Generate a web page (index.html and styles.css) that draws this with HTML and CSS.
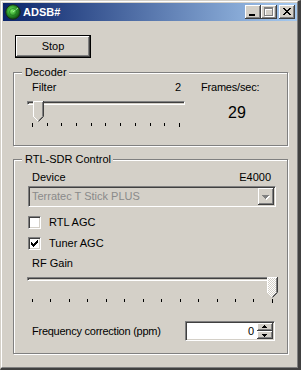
FILE: index.html
```html
<!DOCTYPE html>
<html lang="en">
<head>
  <meta charset="UTF-8">
  <meta name="viewport" content="width=device-width, initial-scale=1.0">
  <title>ADSB#</title>
  <link rel="stylesheet" href="styles.css">
</head>
<body>
  <div class="window">
    <div class="frame">
      <div class="titlebar">
        <svg class="app-icon" width="16" height="16" viewBox="0 0 16 16">
          <defs>
            <radialGradient id="radar" cx="0.42" cy="0.4" r="0.6">
              <stop offset="0" stop-color="#7ef06a"/>
              <stop offset="0.55" stop-color="#2f9a2a"/>
              <stop offset="1" stop-color="#0c4a10"/>
            </radialGradient>
          </defs>
          <circle cx="8" cy="8" r="7.3" fill="url(#radar)" stroke="#1a2a1a" stroke-width="1"/>
          <path d="M8 8L13 4" stroke="#b8ffb0" stroke-width="0.8"/>
          <circle cx="8" cy="8" r="3.5" fill="none" stroke="#1d6a1d" stroke-width="0.6"/>
        </svg>
        <span class="title">ADSB#</span>
        <div class="caption-buttons">
          <span class="cap-btn">
            <svg width="16" height="14" viewBox="0 0 16 14"><path d="M4 9h6v2h-6z" fill="#000"/></svg>
          </span>
          <span class="cap-btn">
            <svg width="16" height="14" viewBox="0 0 16 14">
              <path d="M4 3h9v2h-9z M4 5h1v7h-1z M12 5h1v7h-1z M4 11h9v1h-9z" fill="#fff"/>
              <path d="M3 2h9v2h-9z M3 4h1v7h-1z M11 4h1v7h-1z M3 10h9v1h-9z" fill="#808080"/>
            </svg>
          </span>
          <span class="cap-btn close">
            <svg width="16" height="14" viewBox="0 0 16 14"><path d="M4 3h2v1h-2z M10 3h2v1h-2z M5 4h2v1h-2z M9 4h2v1h-2z M6 5h4v1h-4z M7 6h2v1h-2z M6 7h4v1h-4z M5 8h2v1h-2z M9 8h2v1h-2z M4 9h2v1h-2z M10 9h2v1h-2z" fill="#000"/></svg>
          </span>
        </div>
      </div>

      <div class="client">
        <button class="btn default" type="button">Stop</button>

        <div class="group decoder">
          <span class="group-caption">Decoder</span>
          <div class="decoder-body">
            <div class="filter-col">
              <div class="label-row"><span>Filter</span><span>2</span></div>
              <div class="trackbar">
                <div class="channel"></div>
                <svg class="thumb filter-thumb" width="11" height="21" viewBox="0 0 11 21">
                  <polygon points="0,0 11,0 11,16 5.5,21 0,16" fill="#d4d0c8"/>
                  <path d="M0.5 16V0.5H10" stroke="#fff" fill="none"/>
                  <path d="M0.5 15.5L5 20" stroke="#fff" fill="none"/>
                  <path d="M9.5 1V15.5L5.5 19.5" stroke="#808080" fill="none"/>
                  <path d="M10.5 0V15.5L5.5 20.5" stroke="#404040" fill="none"/>
                </svg>
              </div>
              <div class="ticks">
                <i class="long"></i><i></i><i></i><i></i><i></i><i></i><i></i><i></i><i></i><i></i><i class="long"></i>
              </div>
            </div>
            <div class="fps-col">
              <div class="label-row">Frames/sec:</div>
              <div class="fps">29</div>
            </div>
          </div>
        </div>

        <div class="group rtl">
          <span class="group-caption">RTL-SDR Control</span>
          <div class="rtl-body">
            <div class="device-row"><span>Device</span><span>E4000</span></div>
            <div class="combo">
              <span class="combo-text">Terratec T Stick PLUS</span>
              <span class="combo-btn">
                <svg width="16" height="17" viewBox="0 0 16 17">
                  <path d="M5 8h7v1h-7z M6 9h5v1h-5z M7 10h3v1h-3z M8 11h1v1h-1z" fill="#fff"/>
                  <path d="M4 7h7v1h-7z M5 8h5v1h-5z M6 9h3v1h-3z M7 10h1v1h-1z" fill="#808080"/>
                </svg>
              </span>
            </div>
            <div class="check-row first">
              <span class="check"></span>
              <span>RTL AGC</span>
            </div>
            <div class="check-row">
              <span class="check">
                <svg width="9" height="9" viewBox="0 0 9 9"><path d="M7 1h1v1h-1z M6 2h2v1h-2z M1 3h1v1h-1z M5 3h3v1h-3z M1 4h2v1h-2z M4 4h3v1h-3z M1 5h5v1h-5z M2 6h3v1h-3z M3 7h1v1h-1z" fill="#000"/></svg>
              </span>
              <span>Tuner AGC</span>
            </div>
            <div class="rf-label">RF Gain</div>
            <div class="trackbar rf">
              <div class="channel"></div>
              <svg class="thumb rf-thumb" width="11" height="21" viewBox="0 0 11 21">
                <defs>
                  <pattern id="dither" width="2" height="2" patternUnits="userSpaceOnUse">
                    <rect width="2" height="2" fill="#fff"/>
                    <rect width="1" height="1" fill="#d4d0c8"/>
                    <rect x="1" y="1" width="1" height="1" fill="#d4d0c8"/>
                  </pattern>
                </defs>
                <polygon points="0,0 11,0 11,16 5.5,21 0,16" fill="url(#dither)"/>
                <path d="M0.5 16V0.5H10" stroke="#fff" fill="none"/>
                <path d="M0.5 15.5L5 20" stroke="#fff" fill="none"/>
                <path d="M9.5 1V15.5L5.5 19.5" stroke="#808080" fill="none"/>
                <path d="M10.5 0V15.5L5.5 20.5" stroke="#404040" fill="none"/>
              </svg>
            </div>
            <div class="ticks">
              <i></i><i></i><i></i><i></i><i></i><i></i><i></i><i></i><i></i><i></i><i></i><i></i><i></i><i class="long"></i>
            </div>
            <div class="freq-row">
              <span class="freq-label">Frequency correction (ppm)</span>
              <div class="spin">
                <span class="spin-value">0</span>
                <span class="spin-btns">
                  <span class="spin-btn">
                    <svg width="16" height="8" viewBox="0 0 16 8"><path d="M7 2h1v1h-1z M6 3h3v1h-3z M5 4h5v1h-5z" fill="#000"/></svg>
                  </span>
                  <span class="spin-btn">
                    <svg width="16" height="8" viewBox="0 0 16 8"><path d="M5 3h5v1h-5z M6 4h3v1h-3z M7 5h1v1h-1z" fill="#000"/></svg>
                  </span>
                </span>
              </div>
            </div>
          </div>
        </div>
      </div>
    </div>
  </div>
</body>
</html>
```

FILE: styles.css
```css
body {
  margin: 0;
  font-family: "Liberation Sans", Arial, sans-serif;
  font-size: 11px;
  line-height: 13px;
  color: #000;
  background-color: #d4d0c8;
}
.window {
  width: 301px;
  height: 370px;
  box-sizing: border-box;
  border-style: solid;
  border-width: 1px 3px 2px 1px;
  border-color: #d4d0c8 #404040 #404040 #d4d0c8;
  background-color: #d4d0c8;
}
.frame {
  height: 100%;
  box-sizing: border-box;
  border: 1px solid;
  border-color: #fff #808080 #808080 #fff;
  padding: 1px 0 0 1px;
}

/* title bar */
.titlebar {
  height: 18px;
  display: flex;
  align-items: center;
  padding: 0 2px;
  background: linear-gradient(to right, #0a246a, #a6caf0);
}
.app-icon {
  display: block;
  margin-right: 2px;
}
.title {
  flex: 1;
  color: #fff;
  font-weight: bold;
}
.caption-buttons {
  display: flex;
}
.cap-btn {
  display: block;
  width: 16px;
  height: 14px;
  background-color: #d4d0c8;
  box-shadow: inset -1px -1px #404040, inset 1px 1px #fff, inset -2px -2px #808080, inset 2px 2px #d4d0c8;
}
.cap-btn svg {
  display: block;
}
.cap-btn.close {
  margin-left: 2px;
}

/* client area */
.client {
  padding: 14px 0 0 10px;
}
.btn {
  display: flex;
  align-items: center;
  justify-content: center;
  width: 76px;
  height: 23px;
  margin-left: 2px;
  padding: 0;
  font: inherit;
  color: #000;
  background-color: #d4d0c8;
  border: none;
  box-shadow: inset -1px -1px #404040, inset 1px 1px #fff, inset -2px -2px #808080, inset 2px 2px #d4d0c8;
}
.btn.default {
  border: 1px solid #000;
}

.group {
  position: relative;
  width: 275px;
  box-sizing: border-box;
  border: 1px solid #808080;
  box-shadow: 1px 1px 0 #fff, inset 1px 1px 0 #fff;
}
.group-caption {
  position: absolute;
  top: -7px;
  left: 8px;
  padding: 0 2px 0 3px;
  background-color: #d4d0c8;
}
.decoder {
  margin-top: 14px;
  height: 74px;
}
.rtl {
  margin-top: 13px;
  height: 195px;
}

/* decoder */
.decoder-body {
  display: grid;
  grid-template-columns: 158px auto;
  column-gap: 16px;
  padding: 8px 0 0 13px;
}
.label-row {
  display: flex;
  justify-content: space-between;
}
.filter-col .label-row {
  padding: 0 4px 0 5px;
}
.fps-col .label-row {
  letter-spacing: -0.2px;
}
.fps {
  margin-top: 10px;
  padding-left: 27px;
  font-size: 16px;
  line-height: 18px;
}

/* trackbar */
.trackbar {
  position: relative;
  height: 21px;
  margin-top: 4px;
}
.channel {
  margin-top: 7px;
  height: 4px;
  box-sizing: border-box;
  border: 1px solid;
  border-color: #808080 #fff #fff #808080;
  box-shadow: inset 1px 1px #404040, inset -1px -1px #d4d0c8;
}
.thumb {
  position: absolute;
  top: 0;
  display: block;
}
.filter-thumb {
  left: 6px;
}
.rf-thumb {
  left: 240px;
}
.ticks {
  display: flex;
  justify-content: space-between;
  align-items: flex-start;
  height: 4px;
  margin: 1px 5px 0 5px;
}
.ticks i {
  display: block;
  width: 1px;
  height: 3px;
  background-color: #000;
}
.ticks i.long {
  height: 4px;
}

/* rtl-sdr */
.rtl-body {
  padding: 11px 0 0 14px;
}
.device-row {
  display: flex;
  justify-content: space-between;
  width: 248px;
  box-sizing: border-box;
  padding: 0 5px 0 4px;
}
.combo {
  display: flex;
  width: 248px;
  height: 21px;
  margin-top: 2px;
  box-sizing: border-box;
  padding: 1px;
  border: 1px solid;
  border-color: #808080 #fff #fff #808080;
  box-shadow: inset 1px 1px #404040, inset -1px -1px #d4d0c8;
}
.combo-text {
  flex: 1;
  padding-left: 2px;
  line-height: 17px;
  color: #8a8a8a;
}
.combo-btn {
  display: block;
  width: 16px;
  height: 17px;
  background-color: #d4d0c8;
  box-shadow: inset -1px -1px #404040, inset 1px 1px #fff, inset -2px -2px #808080, inset 2px 2px #d4d0c8;
}
.combo-btn svg {
  display: block;
}
.check-row {
  display: flex;
  align-items: center;
  gap: 8px;
  height: 13px;
  margin-top: 8px;
}
.check-row.first {
  margin-top: 9px;
}
.check {
  display: block;
  width: 13px;
  height: 13px;
  box-sizing: border-box;
  padding: 1px;
  border: 1px solid;
  border-color: #808080 #fff #fff #808080;
  box-shadow: inset 1px 1px #404040, inset -1px -1px #d4d0c8;
  background-color: #fff;
}
.check svg {
  display: block;
}
.rf-label {
  margin-top: 7px;
  padding-left: 4px;
}
.trackbar.rf {
  width: 251px;
  margin-left: -1px;
}
.rf + .ticks {
  width: 241px;
  margin-left: 4px;
}
.freq-row {
  display: flex;
  align-items: center;
  justify-content: space-between;
  width: 247px;
  margin-top: 18px;
}
.freq-label {
  padding-left: 4px;
  letter-spacing: -0.25px;
}
.spin {
  display: flex;
  width: 90px;
  height: 20px;
  box-sizing: border-box;
  padding: 1px;
  border: 1px solid;
  border-color: #808080 #fff #fff #808080;
  box-shadow: inset 1px 1px #404040, inset -1px -1px #d4d0c8;
  background-color: #fff;
}
.spin-value {
  flex: 1;
  text-align: right;
  padding-right: 3px;
  line-height: 16px;
}
.spin-btns {
  display: flex;
  flex-direction: column;
  width: 16px;
}
.spin-btn {
  display: block;
  height: 8px;
  background-color: #d4d0c8;
  box-shadow: inset -1px -1px #404040, inset 1px 1px #fff, inset -2px -2px #808080, inset 2px 2px #d4d0c8;
}
.spin-btn svg {
  display: block;
}
```
